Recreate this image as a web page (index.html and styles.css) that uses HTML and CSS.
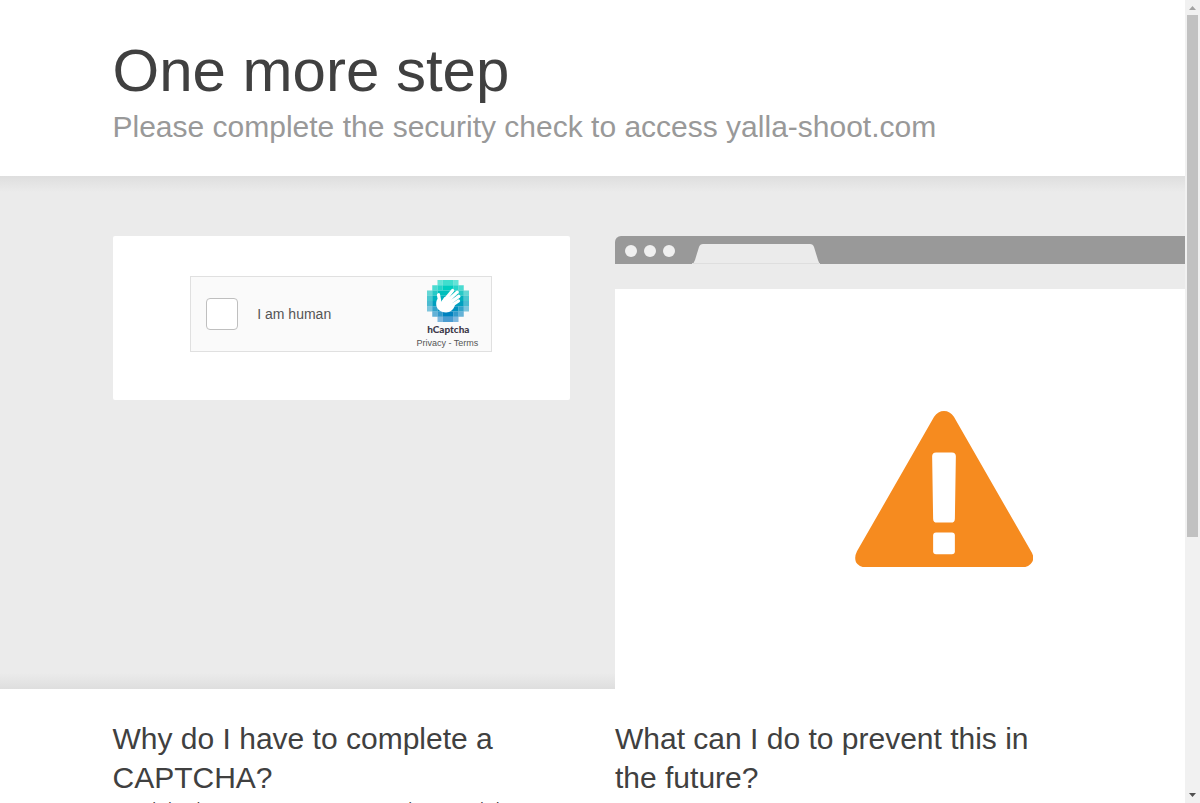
FILE: index.html
```
<!DOCTYPE html>
<html lang="en">
<head>
  <meta charset="UTF-8">
  <meta name="viewport" content="width=device-width, initial-scale=1.0">
  <title>Attention Required!</title>
  <link rel="stylesheet" href="styles.css">
</head>
<body>
  <div class="page">
    <header class="wrapper header">
      <h1>One more step</h1>
      <h2 class="subheadline">Please complete the security check to access yalla-shoot.com</h2>
    </header>

    <section class="highlight">
      <div class="wrapper columns">
        <form class="captcha-box">
          <div class="captcha">
            <input type="checkbox" id="human">
            <label for="human">I am human</label>
            <div class="brand">
              <svg class="logo" viewBox="0 0 128 128" aria-hidden="true">
                <g fill="#00d4bf">
                  <path opacity=".6" d="M32 0h16v16H32zM80 0h16v16H80z"/>
                  <path opacity=".75" d="M48 0h16v16H48zM64 0h16v16H64z"/>
                </g>
                <g fill="#00cdbf">
                  <path opacity=".7" d="M16 16h16v16H16zM96 16h16v16H96z"/>
                  <path opacity=".85" d="M32 16h16v16H32zM80 16h16v16H80z"/>
                  <path d="M48 16h32v16H48z"/>
                </g>
                <g fill="#00bfbc">
                  <path opacity=".6" d="M0 32h16v16H0zM112 32h16v16h-16z"/>
                  <path opacity=".85" d="M16 32h16v16H16zM96 32h16v16H96z"/>
                  <path d="M32 32h64v16H32z"/>
                </g>
                <g fill="#00b0bd">
                  <path opacity=".7" d="M0 48h16v16H0zM112 48h16v16h-16z"/>
                  <path d="M16 48h96v16H16z"/>
                </g>
                <g fill="#009fbf">
                  <path opacity=".7" d="M0 64h16v16H0zM112 64h16v16h-16z"/>
                  <path d="M16 64h96v16H16z"/>
                </g>
                <g fill="#008fbf">
                  <path opacity=".5" d="M0 80h16v16H0zM112 80h16v16h-16z"/>
                  <path opacity=".8" d="M16 80h16v16H16zM96 80h16v16H96z"/>
                  <path d="M32 80h64v16H32z"/>
                </g>
                <g fill="#0082bf">
                  <path opacity=".6" d="M16 96h16v16H16zM96 96h16v16H96z"/>
                  <path opacity=".8" d="M32 96h16v16H32zM80 96h16v16H80z"/>
                  <path d="M48 96h32v16H48z"/>
                </g>
                <g fill="#0074bf">
                  <path opacity=".5" d="M32 112h16v16H32zM80 112h16v16H80z"/>
                  <path opacity=".7" d="M48 112h16v16H48zM64 112h16v16H64z"/>
                </g>
                <path fill="#fff" d="M32 58c4 0 8 9 12 8l9-14 32 26c-5 13-13 21-27 21-18 0-30-12-30-26 0-6 1-11 4-15z"/>
                <path fill="none" stroke="#fff" stroke-width="10" stroke-linecap="round" d="M40 72l-5-27M50 66l28-34M58 68l34-31M65 73l32-23M69 82l27-18"/>
              </svg>
              <span class="brand-name">hCaptcha</span>
              <div class="links"><a href="#">Privacy</a> - <a href="#">Terms</a></div>
            </div>
          </div>
        </form>

        <div class="browser">
          <div class="browser-bar">
            <span class="dot"></span>
            <span class="dot"></span>
            <span class="dot"></span>
            <svg class="tab" viewBox="0 0 128 20" aria-hidden="true">
              <path fill="#ebebeb" d="M0 20q2-1 3-4L7 3q1-3 4-3h107q3 0 4 3l4 13q1 3 2 4z"/>
              <path fill="#dedede" d="M0 19h128v1H0z"/>
            </svg>
          </div>
          <div class="browser-body">
            <svg class="warning" viewBox="0 0 180 160" aria-hidden="true">
              <path fill="#f68b1f" d="M80 7q4-6 10-6t10 6l78 136q4 6 1 11-3 5-10 5H11q-7 0-10-5-2-5 1-11z"/>
              <path fill="#fff" d="M82 43h16q4 0 4 4l-1 63q0 4-4 4H83q-4 0-4-4l-1-63q0-4 4-4z"/>
              <rect fill="#fff" x="79" y="124" width="22" height="22" rx="3"/>
            </svg>
          </div>
        </div>
      </div>
    </section>

    <section class="wrapper columns questions">
      <div>
        <h2>Why do I have to complete a CAPTCHA?</h2>
        <p>Completing the CAPTCHA proves you are a human and gives you temporary access to the web property.</p>
      </div>
      <div>
        <h2>What can I do to prevent this in the future?</h2>
      </div>
    </section>
  </div>

  <div class="scrollbar" aria-hidden="true">
    <svg class="arrow" viewBox="0 0 15 15"><path fill="#a3a3a3" d="M4 10l3.500-4L11 10z"/></svg>
    <div class="thumb"></div>
    <svg class="arrow arrow-down" viewBox="0 0 15 15"><path fill="#505050" d="M4 5h7L7.500 9z"/></svg>
  </div>
</body>
</html>
```
FILE: styles.css
```
* {
  box-sizing: border-box;
}

body {
  display: flex;
  height: 100vh;
  margin: 0;
  overflow: hidden;
  font-family: "Liberation Sans", Arial, sans-serif;
  font-size: 15px;
  line-height: 22px;
  color: #404040;
  background-color: #fff;
}

h1, h2, p {
  margin: 0;
  font-weight: 400;
}

h1 {
  font-size: 60px;
  line-height: 72px;
}

h2 {
  font-size: 30px;
  line-height: 39px;
}

.page {
  flex: 1;
  min-width: 0;
  overflow: hidden;
}

.wrapper {
  max-width: 960px;
  margin: 0 auto;
}

.header {
  padding: 35px 0 30px;
}

.subheadline {
  color: #999;
}

.columns {
  display: grid;
  grid-template-columns: repeat(2, minmax(0, 1fr));
  gap: 45px;
}

.highlight {
  padding-top: 60px;
  overflow: hidden;
  background-color: #ebebeb;
  background-image: linear-gradient(to bottom, #dedede, #ebebeb 16px, #ebebeb calc(100% - 16px), #dedede);
}

/* captcha widget */
.captcha-box {
  display: flex;
  justify-content: center;
  align-self: start;
  padding: 40px 0 48px;
  border-radius: 2px;
  background-color: #fff;
}

.captcha {
  display: flex;
  align-items: center;
  width: 302px;
  height: 76px;
  padding: 0 13px 0 15px;
  border: 1px solid #e0e0e0;
  background-color: #fafafa;
}

.captcha input {
  appearance: none;
  width: 32px;
  height: 32px;
  margin: 0 19px 0 0;
  border: 1px solid #bfbfbf;
  border-radius: 4px;
  background-color: #fff;
}

.captcha label {
  flex: 1;
  font-size: 14px;
  color: #555;
}

.brand {
  display: flex;
  flex-direction: column;
  align-items: center;
  padding-top: 2px;
}

.logo {
  width: 42px;
  height: 42px;
  margin-left: 2px;
}

.brand-name {
  font-family: Lato, sans-serif;
  font-size: 10px;
  font-weight: 900;
  line-height: 14px;
  margin-left: 2px;
  color: #403a4b;
}

.links {
  font-size: 9px;
  line-height: 14px;
  color: #555;
}

.links a {
  color: #555;
  text-decoration: none;
}

/* browser illustration, runs past the right edge */
.browser {
  width: 658px;
}

.browser-bar {
  display: flex;
  align-items: center;
  gap: 7px;
  height: 28px;
  padding: 2px 0 0 10px;
  border-radius: 6px 6px 0 0;
  background-color: #999;
}

.dot {
  width: 12px;
  height: 12px;
  border-radius: 50%;
  background-color: #f0f0f0;
}

.tab {
  align-self: flex-end;
  width: 128px;
  height: 20px;
  margin-left: 10px;
}

.browser-body {
  display: flex;
  align-items: center;
  justify-content: center;
  height: 400px;
  margin-top: 25px;
  background-color: #fff;
}

.warning {
  width: 178px;
  height: 160px;
}

.questions {
  padding: 30px 0;
}

.scrollbar {
  display: flex;
  flex-direction: column;
  width: 15px;
  background-color: #f1f1f1;
}

.arrow {
  width: 15px;
  height: 15px;
}

.arrow-down {
  margin-top: auto;
}

.thumb {
  height: 65%;
  margin: 0 2px;
  background-color: #c1c1c1;
}
```
